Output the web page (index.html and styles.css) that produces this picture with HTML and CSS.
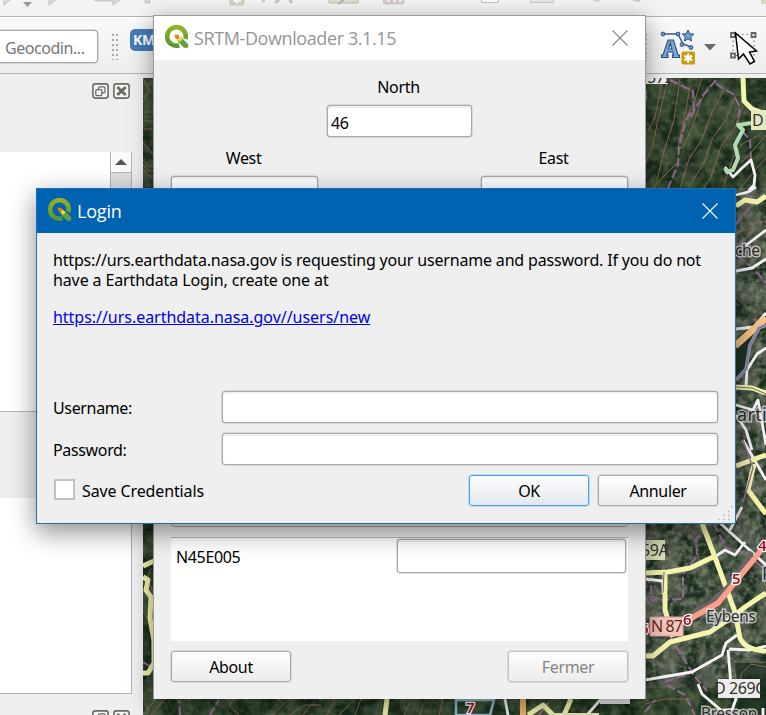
FILE: index.html
```html
<!DOCTYPE html>
<html lang="fr">
<head>
<meta charset="utf-8">
<title>SRTM-Downloader</title>
<link rel="stylesheet" href="styles.css">
</head>
<body>
<svg class="defs" width="0" height="0" aria-hidden="true">
  <defs>
    <linearGradient id="leaf" x1="0" y1="0" x2="0" y2="1"><stop offset="0" stop-color="#93b023"/><stop offset="1" stop-color="#589632"/></linearGradient>
    <symbol id="qgis" viewBox="0 0 24 24">
      <path d="M14.2 20.3A9.3 9.3 0 1 1 20.4 14" fill="none" stroke="url(#leaf)" stroke-width="4.6"/>
      <path d="M12 11.5l4.8 1.2 6.3 6.5v3.6h-4.2l-5.8-6z" fill="#67a03a"/>
      <path d="M11.5 11.3l4 1 2 2.200-2.700 2.200-2.500-2.600z" fill="#f2e13c"/>
      <path d="M9.400 9.400l4.200.6 1 2.200-2.400 2.200-2-1.600z" fill="#ee7913"/>
    </symbol>
    <symbol id="float" viewBox="0 0 17 16">
      <rect x=".9" y=".9" width="15.2" height="14.2" rx="2.5" fill="#f6f6f5" stroke="#6d6a64" stroke-width="1.6"/>
      <rect x="6.5" y="3.8" width="6.5" height="6" rx="1" fill="none" stroke="#6d6a64" stroke-width="1.3"/>
      <rect x="3.8" y="6.6" width="6" height="6" rx="1" fill="#f6f6f5" stroke="#6d6a64" stroke-width="1.3"/>
    </symbol>
    <symbol id="shut" viewBox="0 0 17 16">
      <rect x=".9" y=".9" width="15.2" height="14.2" rx="2.5" fill="#f6f6f5" stroke="#6d6a64" stroke-width="1.6"/>
      <path d="M4.3 4l8.4 8M12.7 4l-8.4 8" stroke="#6d6a64" stroke-width="3"/>
    </symbol>
    <symbol id="cross" viewBox="0 0 16 16"><path d="M.5 .5l15 15M15.5 .5l-15 15" stroke="currentColor" stroke-width="1.1"/></symbol>
  </defs>
</svg>

<div class="app">
  <div class="bar bar-top">
    <svg width="766" height="16" viewBox="0 0 766 16">
      <g fill="#d9d9d8" stroke="#b9b9b8" stroke-width=".8">
        <path d="M4-2v7l7-6zM49-2v7l8-6zM95-3h18v-2l10 3-10 7V1H95z"/>
        <path d="M145-1h5v4h-5z"/>
      </g>
      <path d="M23 2h9l-4.500 5z" fill="#989898"/>
      <rect x="229" y="-6" width="15.500" height="11.500" rx="2.500" fill="#d3d0c2"/><path d="M237-2v6M233 1h8" stroke="#f5f5f2" stroke-width="2"/>
      <path d="M264-1l-1 3M275 3l7-6M288-3l4 6" stroke="#cdc8bd" stroke-width="3"/>
      <path d="M329-2h29v5h-29z" fill="#e0dfd2" stroke="#bbbcae"/><path d="M338 4l8-6" stroke="#aeb0b2" stroke-width="2"/>
      <rect x="383" y="-5" width="21.500" height="9.500" rx="2" fill="#d6c9cb"/><path d="M387 1h3m3 0h3m3 0h3" stroke="#eee" stroke-width="2"/>
      <path d="M481.500-3h17v5.500h-17z" fill="#fafafa" stroke="#c2c2c2"/>
      <path d="M530.500-3h23v5.500h-23z" fill="#e9e9e6" stroke="#c8c6be"/>
      <path d="M593-1l6 2M633 0l7 1" stroke="#cdc8c4" stroke-width="2"/>
      <path d="M761 0h5v4h-5z" fill="#d7d6c4"/>
    </svg>
  </div>
  <div class="bar bar-main">
    <div class="locator">Geocodin...</div>
    <div class="grip"></div>
    <div class="km">KM</div>
    <div class="tools">
      <svg width="120" height="40" viewBox="646 28 120 40">
        <path d="M646.500 34v28" stroke="#aaa" stroke-dasharray="1.500 3"/>
        <path d="M663 34h15l5 10 8 3" fill="none" stroke="#2d5f96" stroke-width="1.500"/>
        <g fill="#6b9ed1" stroke="#24507f"><circle cx="663" cy="34" r="1.900"/><circle cx="678" cy="34" r="1.900"/><circle cx="682" cy="44.500" r="1.900"/><circle cx="691" cy="47.500" r="1.900"/>
        <path d="M688 30l1.700 3.700 4 .4-3 2.800.9 4.100-3.600-2.100-3.600 2.100.9-4.100-3-2.800 4-.4z"/></g>
        <path d="M661.500 57.500v-2.500h1.500l5-15h5.500l4.500 15h1.500v2.500h-7v-2.500h1l-.8-3h-5l-.9 3h1.200v2.500zM668.500 49h3.400l-1.600-6z" fill="#79a7d6" stroke="#2a4f7d" stroke-width="1.100" fill-rule="evenodd"/>
        <rect x="681.500" y="51.500" width="13.500" height="13" rx="2" fill="#c89c08"/>
        <path d="M688.200 53.500v9M684.300 55.700l7.800 4.600M692.100 55.700l-7.800 4.600" stroke="#fff" stroke-width="2.200"/>
        <path d="M704 44h12l-6 6.500z" fill="#6a6a6a"/>
        <path d="M733 34.500h21v21h-21z" fill="none" stroke="#777" stroke-width="1.200" stroke-dasharray="1.500 3"/>
        <g fill="#eee" stroke="#666" stroke-width="1.800"><path d="M731 33h4v4h-4zM751.500 33h4v4h-4zM731 53.500h4v4h-4z"/></g>
        <path d="M735.500 33l3 26 5-5 6.500 10 4.500-2.500-5-9.500 7-1z" fill="#fff" stroke="#000" stroke-width="1.500"/>
      </svg>
    </div>
  </div>

  <div class="work">
    <aside class="dock">
      <div class="dock-head"><svg width="17" height="16"><use href="#float"/></svg><svg width="17" height="16"><use href="#shut"/></svg></div>
      <div class="list"><div class="scroll"><div class="up"><svg width="12" height="6"><path d="M0 6h12L6 0z" fill="#555"/></svg></div><div class="thumb"></div></div></div>
      <div class="gap"></div>
      <div class="list2"></div>
      <div class="dock-foot"><svg width="17" height="16"><use href="#float"/></svg><svg width="17" height="16"><use href="#shut"/></svg></div>
    </aside>
    <svg class="map" width="623" height="637" viewBox="143 78 623 637">
      <defs>
        <filter id="grain" x="0" y="0" width="1" height="1" color-interpolation-filters="sRGB">
          <feTurbulence type="fractalNoise" baseFrequency=".16" numOctaves="4" seed="8"/>
          <feColorMatrix values="0 0 0 0 .58  0 0 0 0 .63  0 0 0 0 .53  3 0 0 0 -1.25"/>
        </filter>
        <filter id="dark" x="0" y="0" width="1" height="1" color-interpolation-filters="sRGB">
          <feTurbulence type="fractalNoise" baseFrequency=".05" numOctaves="5" seed="3"/>
          <feColorMatrix values="0 0 0 0 .06  0 0 0 0 .14  0 0 0 0 .08  4 0 0 0 -1.600"/>
        </filter>
      </defs>
      <rect x="143" y="78" width="623" height="637" fill="#3a4d33"/>
      <path d="M736 188h30v500H645V523h91z" fill="#525a4c"/>
      <rect x="143" y="78" width="623" height="637" filter="url(#dark)" opacity=".8"/>
      <rect x="143" y="78" width="623" height="637" filter="url(#grain)" opacity=".22"/>
      <rect x="645" y="188" width="121" height="490" filter="url(#grain)" opacity=".38"/>
      <path d="M736 340l18-18 0 12-6 30-12 14z" fill="#1d3324"/>
      <path d="M735 663h31v52h-26z" fill="#14291b" opacity=".7"/>

      <g class="contour">
        <path d="M668 78l-8 34-8 35-7 18M680 78l-6 42-10 31-9 37M690 86l-3 18-9 43 5 1 9-20 9-27 8-15M648 131l7-14 8-39M702 78l-7 22-12 25M724 90l-12 22-10 27-13 20-9 29M735 96l-9 24-13 17-9 26-16 25M743 106l-8 22-14 18-10 31-7 11M757 136l-15 8-9 14-10 30M766 135l-11 13-13 14M678 162l-15 15-9 11M766 158l-8 9-17 20"/>
        <path d="M143 112h12M143 121h12M143 129h12M143 142l12 15M143 160l6 6h6M143 164l5 7h7M143 168l5 8h7M143 78l6 12-6 12"/>
        <path d="M736 233l15-5 6-6 9-1M740 690l1-16 10-10 15 3M645 704l20-5h28M151 568l-3 10 6 18M143 611l9 16v24M143 715l13-16M151 715l14-16M239 715l-10-9 5-7M272 715l12-11-7-5M290 715l15-10h12M303 715l8-10h10M327 715l8-16M339 715l14-14M355 715l6-16M404 715l6-13M420 715l3-10M439 715l4-16"/>
      </g>
      <g class="track">
        <path d="M670 80l23 11 1 17-8 12-7 27-1 18-10 23M716 80l-13 15-14 25M716 84l17 10 7 13-3 18 13 15 1 20M736 224l12-14 4-22M738 256l16 13 12 14"/>
        <path d="M645 575l6 10 0 15 32-1 0-25 14-18-1-17 8-7M714 524l12 24 20 5 20 18M651 597l16 3M670 636l23 38 14 17M665 682l25-9M667 685l18 10 10 20M645 712l10-12M180 715l-1-15M210 715l9-15M143 662l8 5M539 715l9-12"/>
      </g>
      <g class="white">
        <path d="M725 167l8 10 9-9 9-8 4 15-1 10-5 5"/>
        <path d="M736 195l12-3 8-5M745 246l21-16M736 271l16-3 14-9M736 329l18-2 12-14M766 348l-9 6-10 16-1 15M736 405l17 5 5-10 8 45M743 440l23 40M736 415l10 15 6 20"/>
        <path d="M720 523l46 42M713 558l12-8 10 5 10-13M730 530l12-23M645 680l47-8 30-17 4-12 11-8M766 646l-16 4-21-1M698 684l4 10 20 17M728 650l3 35 5 14-4 11h-9M645 579l18 2 0 13M505 699l3 16M587 715l14-16M645 90v10M763 715v-7"/>
      </g>
      <path class="mint" d="M752 123l-14 2 5 5-8 15 3 13-5 12-6 2-2-4"/>
      <g class="yellow">
        <path d="M743 78l1 23 8 8 14 5M736 206l9-6 12 2 9-6"/>
        <path d="M736 466l16-6 14-5M754 464l-6 26 18 24M736 387l16 1 14 5"/>
        <path d="M702 523l14 37 19 52 5 26q5 12 26 13M645 573l23-1 22-4 23-11M665 572v38l8 27M645 656h8l17-14 40-10 25-17 10-8 21-14"/>
        <path d="M143 566l11-5M143 577l5 3-2 10 5 7-1 21 4 23v22l-6 10h-5M387 699l-2 16M528 715l15-10 10 10M571 699l-7 16"/>
      </g>
      <path d="M736 387l16 1 14 6M663 593l1-21" fill="none" stroke="#6e6e68"/>
      <path d="M693 612l15-7 22-20 22-33" fill="none" stroke="#696668" stroke-width="5"/>
      <path d="M690 619l28-16 19-23 22-27 7-9" fill="none" stroke="#fc9e88" stroke-width="5.500"/>
      <path d="M735 346l31-28" fill="none" stroke="#f5c282" stroke-width="7"/>
      <path d="M523 699v16" stroke="#f5b46e" stroke-width="6"/>
      <path d="M736 380l10-11 4-24 9-17 7-3" fill="none" stroke="#8aa4b8" stroke-width="3.500"/>
      <path d="M736 380l10-11 4-24 9-17 7-3M743 440l10 28-10 34M736 256l8-18" fill="none" stroke="#9a7099" stroke-width="1.500"/>
      <path d="M456 700h38l-4 15h-34z" fill="none" stroke="#91bdca" stroke-width="2.500"/>

      <g class="plate">
        <path d="M646 78h22v6h-22z" fill="#f2f2f0"/><text x="647" y="83">57I</text>
        <path d="M751 110h17v20h-17z" fill="#e6e7bd"/><text x="752" y="126" fill="#47430e">D</text>
        <path d="M645 540h20v20h-20z" fill="#dce3b8"/><text x="641" y="556" fill="#474b22">59A</text>
        <path d="M650 617h33v19h-33z" fill="#f0c7bd" stroke="#e39f96"/><text x="651" y="632" fill="#6b241b" class="nat">N 87</text>
        <path d="M718 679h42v19h-42z" fill="#ecebea"/><text x="714" y="694">D 269C</text>
        <path d="M600 699h30v5h-30z" fill="#eee"/><path d="M551 713h48v2h-48z" fill="#e8e8c0"/>
      </g>
      <g class="town">
        <text x="735" y="256">che</text><text x="737" y="421" class="big">arti</text>
        <text x="706" y="622">Eybens</text><text x="701" y="719">Bresson</text><text x="762" y="580" class="big">P</text>
      </g>
      <g class="exit"><text x="732" y="584">5</text><text x="683" y="625">6</text><text x="758" y="551">4</text><text x="640" y="634">6</text><text x="466" y="713">7</text></g>
    </svg>
  </div>
</div>

<section class="win srtm">
  <header><svg width="24" height="24"><use href="#qgis"/></svg><h1>SRTM-Downloader 3.1.15</h1><svg class="x" width="16" height="16"><use href="#cross"/></svg></header>
  <div class="bounds">
    <label class="n">North</label><div class="field n">46</div>
    <label class="w">West</label><label class="e">East</label>
    <div class="field w"></div><div class="field e"></div>
  </div>
  <div class="group"></div>
  <div class="table"><span>N45E005</span><div class="field"></div></div>
  <footer><button>About</button><button disabled>Fermer</button></footer>
</section>

<section class="win login">
  <header><svg width="24" height="24"><use href="#qgis"/></svg><h1>Login</h1><svg class="x" width="16" height="16"><use href="#cross"/></svg></header>
  <div class="content">
    <p class="msg"><span class="l1">https://urs.earthdata.nasa.gov is requesting your username and password. If you do not</span><br><span class="l2">have a Earthdata Login, create one at</span></p>
    <p class="msg"><a>https://urs.earthdata.nasa.gov//users/new</a></p>
    <div class="form">
      <label>Username:</label><div class="field"></div>
      <label>Password:</label><div class="field"></div>
    </div>
    <div class="actions"><i class="check"></i><span class="save">Save Credentials</span><button class="ok">OK</button><button>Annuler</button></div>
  </div>
  <svg class="size" width="16" height="16"><path d="M1 14.500h15M6 10.500h10M11 6.500h5M14 1.500h2" stroke="#b5b5b5" stroke-width="1.500" stroke-dasharray="1.500 3.500"/></svg>
</section>
</body>
</html>
```
FILE: styles.css
```css
* { box-sizing: border-box; }
body { margin: 0; width: 766px; height: 715px; overflow: hidden; position: relative; background: #efefef; color: #000; font: 16px/20px "Noto Sans", sans-serif; letter-spacing: -.35px; }
svg { display: block; flex: none; }
.defs { position: absolute; }
.app { display: flex; flex-direction: column; height: 715px; }
.bar { flex: none; }
.bar-top { height: 17px; background: #f3f3f3; border-bottom: 1px solid #b4b4b4; }
.bar-main { height: 57px; display: flex; align-items: flex-start; background: linear-gradient(#fafafa, #ededed); border-bottom: 1px solid #b4b4b4; padding-top: 11px; }
.locator { width: 98px; height: 33px; margin-top: 2px; border: 1px solid #a8a8a8; border-left: 0; border-radius: 0 4px 4px 0; box-shadow: 0 0 0 .5px #bbb; background: #fff; color: #777; padding: 7px 0 0 5px; white-space: nowrap; letter-spacing: -.45px; }
.grip { width: 6px; height: 26px; margin: 6px 12px 0 14px; background: radial-gradient(circle at 1px 1px, #aaa 1px, transparent 1.3px) 0 0 / 4px 5px; }
.km { width: 44px; height: 22px; margin-top: 1px; padding: 1px 0 0 3px; border-radius: 5px; background: #457bb8; color: #fff; font: bold 14px/20px "Open Sans", sans-serif; letter-spacing: -.4px; }
.tools { margin-left: auto; }
.work { display: flex; flex: 1; min-height: 0; }
.dock { width: 143px; display: flex; flex-direction: column; }
.map { margin-top: 4px; }
.dock-head, .dock-foot { display: flex; gap: 4px; padding-left: 92px; }
.dock-head { padding-top: 9px; height: 78px; flex: none; }
.dock-foot { padding-top: 16px; }
.list { width: 132px; height: 260px; background: #fff; border-bottom: 1px solid #b4b4b4; display: flex; justify-content: flex-end; flex: none; }
.scroll { width: 22px; border: solid #b4b4b4; border-width: 0 1px; background: #ddd; }
.up { height: 21px; display: grid; place-items: center; background: #fafafa; border-bottom: 1px solid #b4b4b4; }
.thumb { height: 100px; margin-top: 1px; background: #dedede; }
.gap { height: 86px; flex: none; }
.list2 { width: 132px; height: 196px; background: #fff; border: solid #b4b4b4; border-width: 0 1px 1px 0; flex: none; }

.contour path { fill: none; stroke: #94684f; stroke-width: 1; opacity: .9; }
.track path { fill: none; stroke: #91688f; stroke-width: 2; stroke-dasharray: 9 3; }
.white path { fill: none; stroke: #f6f4f6; stroke-width: 2.8; stroke-linejoin: round; }
.yellow path { fill: none; stroke: #f5f5ae; stroke-width: 5; stroke-linejoin: round; }
.mint { fill: none; stroke: #b0dbb2; stroke-width: 4; stroke-linejoin: round; }
.plate text, .town text { font: 16px "Noto Sans", sans-serif; fill: #333; letter-spacing: -.4px; }
.plate .nat { fill: #6b241b; letter-spacing: -.9px; }
.town text { stroke: #e4e6e2; stroke-opacity: .75; stroke-width: 3; paint-order: stroke; fill: #2e2e2e; font-size: 15.500px; }
.town .big { font-size: 18px; letter-spacing: .3px; }
.exit text { font: 15px "Noto Sans", sans-serif; font-weight: 600; fill: #a3131d; stroke: #fff; stroke-width: 2.500px; paint-order: stroke; }

.win { position: absolute; background: #efefef; }
.win header { display: flex; align-items: flex-start; }
.win h1 { margin: 0; font: 18px/24px "Open Sans", sans-serif; letter-spacing: -.2px; white-space: nowrap; }
.x { margin-left: auto; }
.field { height: 32px; margin-bottom: 1px; background: #fff; border: 1px solid #a8a8a8; border-radius: 3px; box-shadow: 0 0 0 .5px #c4c4c4, inset 0 2px 1px #f0f0f0; }
button { width: 120px; height: 31px; margin-bottom: 1px; border: 1px solid #a8a8a8; border-radius: 3px; box-shadow: 0 0 0 .5px #c4c4c4; background: linear-gradient(#fdfdfd, #ececec); color: #000; font: inherit; letter-spacing: inherit; padding: 0; }
button:disabled { color: #858585; border-color: #c3c3c3; }
button.ok { border-color: #3fa4f5; box-shadow: 0 0 0 .5px #8cc6f8; background: linear-gradient(#fdfdfd, #e2e8ed); }

.srtm { left: 153px; top: 15px; width: 493px; height: 684px; border: 1px solid #999; border-bottom: 0; box-shadow: 0 6px 22px rgba(0,0,0,.42); display: flex; flex-direction: column; }
.srtm header { height: 44px; flex: none; background: #fff; padding: 9px 17px 0 11px; color: #959595; }
.srtm h1 { margin: 1px 0 0 5px; letter-spacing: -.4px; }
.srtm .x { margin-top: 5px; color: #888; }
.bounds { display: grid; grid-template-columns: 147px 145px 147px; column-gap: 9px; padding: 17px 17px 0; grid-template-rows: 20px 33px 20px 33px; row-gap: 8px; }
.bounds label { text-align: center; }
.bounds .field { padding: 7px 3px; }
.bounds .n { grid-column: 2; }
.bounds .w { grid-column: 1; }
.bounds .e { grid-column: 3; }
.bounds label.w, .bounds label.e { grid-row: 3; padding-top: 2px; }
.bounds .field.w, .bounds .field.e { grid-row: 4; margin-top: 2px; }
.bounds label.w, .bounds label.e, .bounds label.n { padding-right: 2px; }
.group { margin: auto 17px 0; height: 300px; border: 1px solid #a8a8a8; border-radius: 4px; flex: none; }
.table { margin: 10px 17px 0; height: 104px; flex: none; background: #fff; border-top: 1px solid #b4b4b4; display: flex; padding: 1px 2px 0 5px; }
.table span { padding-top: 8px; }
.table .field { margin-left: auto; width: 229px; height: 34px; }
.srtm footer { display: flex; justify-content: space-between; padding: 10px 17px 16px; flex: none; }

.login { left: 36px; top: 188px; width: 700px; height: 336px; border: 1px solid #1a6fb5; box-shadow: 0 8px 24px rgba(0,0,0,.45); }
.login header { height: 44px; background: #0063b1; color: #fff; padding: 9px 17px 0 11px; }
.login h1 { margin: 1px 0 0 5px; }
.login .x { margin-top: 5px; }
.content { padding: 17px 17px 0 16px; }
.msg { margin: 0 0 17px; white-space: nowrap; }
.l1 { letter-spacing: -.175px; }
.l2 { letter-spacing: -.12px; }
.msg a { color: #0000f0; text-decoration: underline; letter-spacing: -.035px; }
.save { letter-spacing: -.12px; }
.form { display: grid; grid-template-columns: 169px 1fr; row-gap: 9px; align-items: center; margin-top: 64px; }
.actions { display: flex; align-items: center; margin-top: 9px; }
.check { width: 21px; height: 21px; margin: -3px 7px 0 1px; background: #fff; border: 2px solid #c2c2c2; }
.ok { margin-right: 9px; margin-left: auto; }
.size { position: absolute; right: 2px; bottom: 2px; }
```
